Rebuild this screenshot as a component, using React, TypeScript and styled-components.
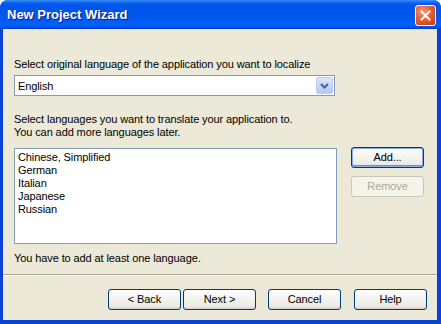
import styled, { createGlobalStyle } from "styled-components";

const GlobalStyle = createGlobalStyle`
  html, body {
    margin: 0;
    padding: 0;
    background: #ffffff;
  }
  body {
    font-family: "Liberation Sans", Arial, sans-serif;
    font-size: 11px;
    letter-spacing: -0.1px;
    color: #000000;
  }
`;

const Window = styled.div`
  width: 441px;
  height: 324px;
  display: flex;
  flex-direction: column;
  border-radius: 8px 8px 0 0;
  overflow: hidden;
  background: #0842d6;
`;

const TitleBar = styled.div`
  height: 29px;
  flex: 0 0 29px;
  box-sizing: border-box;
  display: flex;
  align-items: flex-start;
  justify-content: space-between;
  padding: 0 5px 0 7px;
  background: linear-gradient(
    180deg,
    #3d8ff7 0px,
    #1a6ef2 2px,
    #0058ee 4px,
    #0054e8 10px,
    #0058ee 18px,
    #0061fa 24px,
    #005cf4 26px,
    #0046d8 28px,
    #0038c8 29px
  );
`;

const Title = styled.span`
  margin-top: 7px;
  font-family: "Liberation Sans", Arial, sans-serif;
  font-weight: bold;
  font-size: 13px;
  letter-spacing: 0;
  line-height: 16px;
  color: #ffffff;
  text-shadow: 1px 1px 0 #0a1883;
`;

const CloseButton = styled.div`
  margin-top: 5px;
  width: 21px;
  height: 21px;
  box-sizing: border-box;
  border: 1px solid #ffffff;
  border-radius: 3px;
  background: radial-gradient(
    circle at 35% 30%,
    #f49a7c 0%,
    #e5653f 40%,
    #cf4520 80%,
    #b8361a 100%
  );
  display: flex;
  align-items: center;
  justify-content: center;
`;

const Client = styled.div`
  flex: 1;
  display: flex;
  flex-direction: column;
  background: #ece9d8;
  margin: 0 4px 4px 3px;
`;

const Content = styled.div`
  display: flex;
  flex-direction: column;
  padding: 29px 13px 0 11px;
`;

const Label = styled.div<{ $top?: number }>`
  line-height: 13px;
  margin-top: ${(p) => p.$top ?? 0}px;
`;

const Combo = styled.div`
  margin-top: 4px;
  width: 321px;
  height: 21px;
  box-sizing: border-box;
  border: 1px solid #7f9db9;
  background: #ffffff;
  display: flex;
  align-items: center;
  justify-content: space-between;
  padding: 0 1px 0 3px;
`;

const ComboButton = styled.div`
  width: 17px;
  height: 17px;
  box-sizing: border-box;
  border: 1px solid #bccdf8;
  border-radius: 2px;
  background: linear-gradient(180deg, #dce6fe 0%, #c6d5fc 50%, #b4c8fb 100%);
  display: flex;
  align-items: center;
  justify-content: center;
`;

const ListRow = styled.div`
  margin-top: 9px;
  display: flex;
  gap: 14px;
  align-items: flex-start;
`;

const ListBox = styled.div`
  flex: 1;
  height: 96px;
  box-sizing: border-box;
  border: 1px solid #7f9db9;
  background: #ffffff;
  padding: 2px 2px;
`;

const ListItem = styled.div`
  line-height: 13px;
  padding-left: 1px;
`;

const SideButtons = styled.div`
  display: flex;
  flex-direction: column;
  gap: 8px;
  margin-top: -1px;
`;

const Button = styled.div<{ $default?: boolean; $disabled?: boolean }>`
  width: 73px;
  height: 21px;
  box-sizing: border-box;
  border: 1px solid ${(p) => (p.$disabled ? "#c9c7ba" : "#003c74")};
  border-radius: 3px;
  background: ${(p) =>
    p.$disabled
      ? "#f5f4ea"
      : "linear-gradient(180deg, #ffffff 0%, #f4f4f0 40%, #ecebe6 85%, #d6d0c5 100%)"};
  color: ${(p) => (p.$disabled ? "#aca899" : "#000000")};
  box-shadow: ${(p) =>
    p.$default ? "inset 0 0 0 1px #89ade4, inset 0 -1px 0 1px #6a8fd8" : "none"};
  display: flex;
  align-items: center;
  justify-content: center;
  line-height: 13px;
`;

const Divider = styled.div`
  height: 0;
  border-top: 1px solid #aca899;
  border-bottom: 1px solid #ffffff;
  margin-top: auto;
`;

const Footer = styled.div`
  display: flex;
  justify-content: flex-end;
  padding: 13px 10px 10px 0;
`;

const Spacer = styled.div<{ $w: number }>`
  width: ${(p) => p.$w}px;
`;

const languages = ["Chinese, Simplified", "German", "Italian", "Japanese", "Russian"];

export default function App() {
  return (
    <>
      <GlobalStyle />
      <Window>
        <TitleBar>
          <Title>New Project Wizard</Title>
          <CloseButton>
            <svg width="11" height="11" viewBox="0 0 11 11">
              <path
                d="M1.5 1.5 L9.5 9.5 M9.5 1.5 L1.5 9.5"
                stroke="#ffffff"
                strokeWidth="2"
                strokeLinecap="square"
              />
            </svg>
          </CloseButton>
        </TitleBar>
        <Client>
          <Content>
            <Label>Select original language of the application you want to localize</Label>
            <Combo>
              <span>English</span>
              <ComboButton>
                <svg width="9" height="6" viewBox="0 0 9 6">
                  <path d="M1 1 L4.5 4.5 L8 1" stroke="#4d6185" strokeWidth="2" fill="none" />
                </svg>
              </ComboButton>
            </Combo>
            <Label $top={17}>
              Select languages you want to translate your application to.
              <br />
              You can add more languages later.
            </Label>
            <ListRow>
              <ListBox>
                {languages.map((l) => (
                  <ListItem key={l}>{l}</ListItem>
                ))}
              </ListBox>
              <SideButtons>
                <Button $default>Add...</Button>
                <Button $disabled>Remove</Button>
              </SideButtons>
            </ListRow>
            <Label $top={8}>You have to add at least one language.</Label>
          </Content>
          <Divider />
          <Footer>
            <Button>&lt; Back</Button>
            <Spacer $w={2} />
            <Button>Next &gt;</Button>
            <Spacer $w={12} />
            <Button>Cancel</Button>
            <Spacer $w={13} />
            <Button>Help</Button>
          </Footer>
        </Client>
      </Window>
    </>
  );
}
